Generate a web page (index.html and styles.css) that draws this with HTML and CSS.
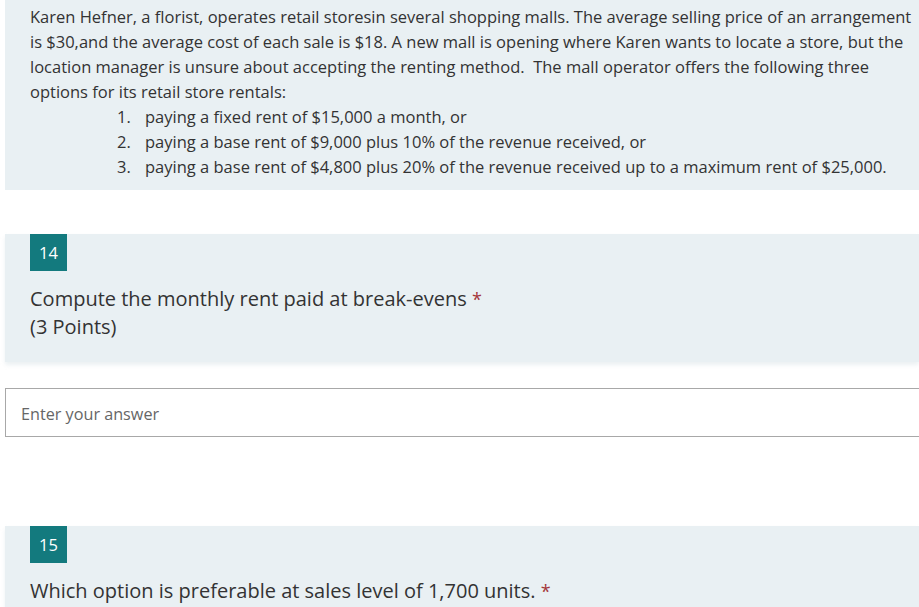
FILE: index.html
```html
<!DOCTYPE html>
<html lang="en">
<head>
<meta charset="utf-8">
<title>Form</title>
<link rel="stylesheet" href="styles.css">
</head>
<body>
<div class="page">
  <section class="intro">
    <p class="intro-text">Karen Hefner, a florist, operates retail storesin several shopping malls. The average selling price of an arrangement<br>is $30,and the average cost of each sale is $18. A new mall is opening where Karen wants to locate a store, but the<br>location manager is unsure about accepting the renting method.&nbsp; The mall operator offers the following three<br>options for its retail store rentals:</p>
    <ol class="options">
      <li class="option"><span class="num">1.</span><span>paying a fixed rent of $15,000 a month, or</span></li>
      <li class="option"><span class="num">2.</span><span>paying a base rent of $9,000 plus 10% of the revenue received, or</span></li>
      <li class="option"><span class="num">3.</span><span>paying a base rent of $4,800 plus 20% of the revenue received up to a maximum rent of $25,000.</span></li>
    </ol>
  </section>

  <section class="question">
    <div class="badge">14</div>
    <div class="q-title">Compute the monthly rent paid at break-evens <span class="req">*</span></div>
    <div class="q-title">(3 Points)</div>
  </section>

  <div class="answer">Enter your answer</div>

  <section class="question question-next">
    <div class="badge">15</div>
    <div class="q-title">Which option is preferable at sales level of 1,700 units. <span class="req">*</span></div>
  </section>
</div>
</body>
</html>
```

FILE: styles.css
```css
* { box-sizing: border-box; }
html, body { margin: 0; padding: 0; background: #ffffff; overflow: hidden; }
body {
  font-family: "Open Sans", "Noto Sans", "Liberation Sans", sans-serif;
  color: #333333;
  width: 919px;
  height: 607px;
}
.page {
  display: flex;
  flex-direction: column;
  padding-left: 5px;
}
.intro {
  background: #e9f0f3;
  padding: 4px 0 10px 25px;
  height: 190px;
}
.intro-text {
  margin: 0;
  font-size: 16.5px;
  line-height: 25px;
  white-space: nowrap;
}
.options {
  list-style: none;
  margin: 0;
  padding: 0 0 0 87px;
}
.option {
  display: flex;
  font-size: 16.5px;
  line-height: 25px;
  white-space: nowrap;
}
.num { width: 28px; flex: none; }
.question {
  margin-top: 44px;
  background: #e9f0f3;
  padding: 0 0 22px 25px;
  height: 128px;
  box-shadow: 0 3px 4px rgba(200, 215, 220, 0.35);
}
.badge {
  width: 37px;
  height: 37px;
  background: #137a7e;
  color: #ffffff;
  font-size: 16.5px;
  display: flex;
  align-items: center;
  justify-content: center;
  margin-bottom: 14px;
}
.q-title {
  font-size: 20px;
  line-height: 27px;
  color: #333333;
  white-space: nowrap;
}
.req { color: #a4373a; font-size: 18px; }
.answer {
  margin-top: 26px;
  height: 49px;
  width: 930px;
  border: 1px solid #a8a8a8;
  background: #ffffff;
  padding: 2px 0 0 15px;
  display: flex;
  align-items: center;
  color: #666666;
  font-size: 16.2px;
}
.question-next {
  margin-top: 89px;
  height: 90px;
}
```
